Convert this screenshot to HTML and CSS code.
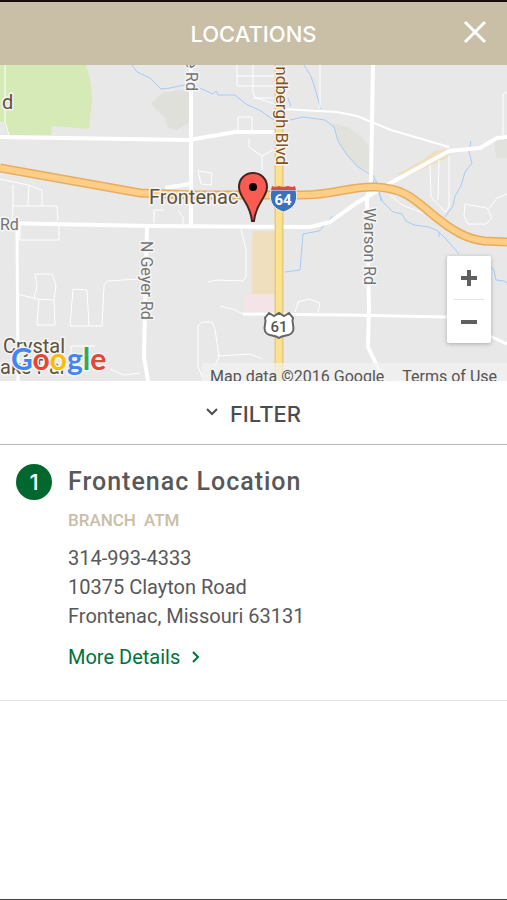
FILE: index.html
```html
<!DOCTYPE html>
<html lang="en">
<head>
<meta charset="utf-8">
<meta name="viewport" content="width=device-width, initial-scale=1">
<title>Locations</title>
<link rel="stylesheet" href="styles.css">
</head>
<body>
<header class="topbar">
  <h1 class="topbar-title">LOCATIONS</h1>
  <button class="close" type="button" aria-label="Close">
    <svg width="24" height="24" viewBox="0 0 24 24" aria-hidden="true"><path d="M2 2 22 22M22 2 2 22"/></svg>
  </button>
</header>
<main>
  <section class="map" aria-label="Map">
    <svg class="map-canvas" viewBox="0 65 507 316" preserveAspectRatio="xMidYMid slice" role="img" aria-label="Map of Frontenac">
      <g class="areas">
        <path fill="#d5eab7" d="M0 65H86Q92 82 92 100L89 129 52 126 51 135H9L5 128 4 122H0Z"/>
        <path fill="#e0e0da" d="M151 103 162 93 180 90 189 92V123L176 130 167 127 166 118 157 111Z"/>
        <path fill="#e2e2dc" d="M332 123 348 127 364 139 371 150V172L356 166 340 146ZM494 140 507 136V158H496Z"/>
        <path fill="#efdfbf" d="M397 174 423 160 434 151 447 149 449 157 425 168 405 177ZM253 231H275V295H252V240Z"/>
        <path fill="#f4e4e8" d="M246 294H275V312H246Z"/>
      </g>
      <g class="water">
        <path d="M132 65 137 72 150 78 161 89 170 88 189 84 202 89 213 94 216 91 218 95 235 95 246 104 261 111 272 119 290 120 303 117 325 120 334 127 338 141 347 155 358 167 371 175 375 185 383 202 393 212 402 214 406 221 414 225 429 227 438 231 446 239 459 254"/>
        <path d="M304 65Q312 76 314 85L321 109M288 98 291 106M471 141 469 152 472 163 465 172 461 186 455 196 453 206 445 217M373 175 378 185 381 201M333 216 319 231 303 234 300 270 285 272M439 232V237M489 266 494 270 496 280 504 281 507 283"/>
      </g>
      <g class="roads-small">
        <path d="M5 65V122L9 135M0 179 28 185 42 190V206H57L58 221M13 185V205L12 224M29 185 28 205M12 206H42M20 225V240H59V223M154 223V210H164M320 108V65M253 65V93L256 98 275 104M237 65V86H275M237 76H275M253 98H275M238 130V117H252V130M249 139V147L262 156V170M262 156 278 147M198 171 201 184 211 185 212 173ZM178 210 183 217V224"/>
        <path d="M20 226 17 250M17 294 37 299 54 300 56 285 52 274H35L37 286 34 299M39 299 37 325H55L54 300M70 326 73 289 87 290 89 326ZM89 326H102L104 285 107 281 140 279M241 229 246 250V276L243 281 216 280 208 282M220 306 235 310 243 314M204 381 198 367V326L202 322H212L215 329 219 357 214 367M218 356 250 354 262 359M295 312 298 302 309 299 320 303 318 312M71 346H95M71 346V355M110 369 124 375 140 373M430 165 431 197 445 212 449 207V156M439 160 438 200M390 195 402 205 423 213M465 204 487 208 492 218 486 224 468 224 464 216ZM489 209 497 198 507 194M503 135 503 94 507 92"/>
      </g>
      <g class="roads">
        <path stroke-width="2" d="M282 109 337 112 357 116 391 130 449 147"/>
        <path stroke-width="3" d="M243 314 346 315 448 317 507 344M17 226 18 381"/>
        <path stroke-width="4" d="M0 137 189 140 235 132H276M0 223 150 226 310 227 330 222 355 204 387 185 449 151 480 148 497 138 507 137M191 65V226M373 65 371 180 367 200 369 310 368 347 384 381M147 226 144 357 148 381M165 188 190 184"/>
      </g>
      <path d="M279 65V381" stroke="#e6ca7d" stroke-width="9"/>
      <path d="M279 65V381" stroke="#fbe28f" stroke-width="6"/>
      <path class="highway-edge" d="M0 168 140 193 195 195H302C335 195 350 186 375 187C404 188 414 199 432 214C455 233 468 239 484 241L507 242"/>
      <path class="highway" d="M0 168 140 193 195 195H302C335 195 350 186 375 187C404 188 414 199 432 214C455 233 468 239 484 241L507 242"/>
      <g class="place">
        <text x="2" y="109">d</text>
        <text x="149" y="204">Frontenac</text>
        <text x="3" y="353">Crystal</text>
        <text x="0" y="374">ake Park</text>
      </g>
      <g class="street">
        <text x="0" y="230">Rd</text>
        <text transform="translate(141 241) rotate(90)">N Geyer Rd</text>
        <text transform="translate(186 91) rotate(90)" text-anchor="end">e Rd</text>
        <text transform="translate(364 208) rotate(90)">Warson Rd</text>
        <text class="boulevard" transform="translate(276 165) rotate(90)" text-anchor="end">ndbergh Blvd</text>
      </g>
      <g>
        <path fill="#3b70bd" stroke="#f5f5f5" d="M271 190H296C299 204 292 209 283.500 212C275 209 268 204 271 190Z"/>
        <path fill="#d84d4b" d="M272 186 275 187 279 186 283 187 288 186 292 187 295 186 296 190H271Z"/>
        <text class="shield interstate" x="283" y="205" text-anchor="middle">64</text>
      </g>
      <g>
        <path fill="#fff" stroke="#666" stroke-width="2" d="M269 313 274 316 279 313 284 316 289 313 293 318C291 323 295 326 293 331C291 337 284 334 279 338C274 334 267 337 265 331C263 326 267 323 265 318Z"/>
        <text class="shield" x="279" y="332" text-anchor="middle">61</text>
      </g>
      <path fill="#fb5c51" stroke="#442321" stroke-width="2" d="M253 173C245 173 239 179 239 187C239 198 250 202 252 221H254C256 202 267 198 267 187C267 179 261 173 253 173Z"/>
      <circle fill="#000" cx="253" cy="187" r="4"/>
      <text class="google" x="11" y="370"><tspan fill="#4285f4">G</tspan><tspan fill="#e94335">o</tspan><tspan fill="#fbbc05">o</tspan><tspan fill="#4285f4">g</tspan><tspan fill="#34a853">l</tspan><tspan fill="#e94335">e</tspan></text>
    </svg>
    <div class="zoom">
      <button type="button" aria-label="Zoom in"><svg width="18" height="18" viewBox="0 0 18 18" aria-hidden="true"><path d="M1 9H17M9 1V17"/></svg></button>
      <button type="button" aria-label="Zoom out"><svg width="18" height="18" viewBox="0 0 18 18" aria-hidden="true"><path d="M1 9H17"/></svg></button>
    </div>
    <div class="attribution">
      <span>Map data ©2016 Google</span>
      <a href="#terms">Terms of Use</a>
    </div>
  </section>
  <button class="filter" type="button">
    <svg width="12" height="8" viewBox="0 0 12 8" aria-hidden="true"><path d="M1 1 6 6 11 1"/></svg>
    <span>FILTER</span>
  </button>
  <article class="location">
    <span class="number">1</span>
    <div class="details">
      <h2>Frontenac Location</h2>
      <p class="tags"><span>BRANCH</span><span>ATM</span></p>
      <address>314-993-4333<br>10375 Clayton Road<br>Frontenac, Missouri 63131</address>
      <a class="more" href="#details">More Details
        <svg width="8" height="14" viewBox="0 0 8 14" aria-hidden="true"><path d="M1 1 6 6 1 11"/></svg>
      </a>
    </div>
  </article>
</main>
</body>
</html>
```
FILE: styles.css
```css
* {
  box-sizing: border-box;
}

body {
  display: flex;
  flex-direction: column;
  min-height: 100vh;
  margin: 0;
  border-top: 2px solid #170d0c;
  border-bottom: 1px solid #444;
  background: #fff;
  color: #58585a;
  font-family: Roboto, "Liberation Sans", sans-serif;
}

button {
  padding: 0;
  border: 0;
  background: none;
  color: inherit;
}

svg {
  display: block;
  fill: none;
}

.topbar {
  display: grid;
  grid-template-columns: 64px 1fr 64px;
  align-items: center;
  height: 63px;
  background: #c9bea6;
  color: #fff;
}

.topbar-title {
  grid-column: 2;
  margin: 0;
  font: 500 22px/32px Inter, sans-serif;
  text-align: center;
}

.close {
  display: grid;
  place-items: center;
  height: 52px;
  padding-bottom: 4px;
}

.close path {
  stroke: #fff;
  stroke-width: 3;
}

.map {
  position: relative;
  height: 316px;
  overflow: hidden;
  background: #e8e8e8;
}

.map-canvas {
  width: 100%;
  height: 100%;
}

.water {
  stroke: #a5cbf9;
  stroke-width: 1;
}

.roads-small,
.roads {
  stroke: #fff;
  stroke-linejoin: round;
}

.roads-small {
  stroke-width: 1;
}

.highway-edge {
  stroke: #e6ad60;
  stroke-width: 9;
}

.highway {
  stroke: #fece87;
  stroke-width: 6;
}

.map text {
  paint-order: stroke;
  stroke: #f5f5f5;
  stroke-width: 3px;
  stroke-linejoin: round;
}

.place {
  fill: #5f513c;
  font-size: 20px;
}

.street {
  fill: #737373;
  font-size: 16px;
}

.street .boulevard {
  fill: #875116;
  font-size: 17px;
}

.map .shield {
  fill: #555;
  stroke: none;
  font-size: 15px;
  font-weight: 500;
}

.map .interstate {
  fill: #fff;
  font-weight: 700;
}

.google {
  font: 700 30px Lato, sans-serif;
}

.zoom {
  position: absolute;
  right: 16px;
  bottom: 38px;
  width: 44px;
  border-radius: 2px;
  background: #fff;
  box-shadow: 0 1px 4px #0004;
}

.zoom button {
  display: grid;
  place-items: center;
  width: 100%;
  height: 43px;
}

.zoom button + button {
  grid-template-rows: 1px 1fr;
  height: 44px;
}

.zoom button + button::before {
  content: "";
  width: 30px;
  height: 1px;
  background: #e3e3e3;
}

.zoom path {
  stroke: #606060;
  stroke-width: 4;
}

.attribution {
  position: absolute;
  right: 0;
  bottom: -10px;
  display: flex;
  gap: 18px;
  padding: 0 10px 0 8px;
  background: #f1f1f1b8;
  color: #555;
  font-size: 16px;
  line-height: 28px;
  white-space: nowrap;
}

.attribution a {
  color: inherit;
  text-decoration: none;
}

.filter {
  display: flex;
  align-items: center;
  justify-content: center;
  gap: 12px;
  width: 100%;
  height: 64px;
  padding-top: 2px;
  border-bottom: 1px solid #bbb;
  color: #4d4d4f;
  font: 500 22px/32px Inter, sans-serif;
}

.filter svg {
  margin-bottom: 4px;
}

.filter path {
  stroke: #4d4d4f;
  stroke-width: 2;
}

.location {
  display: flex;
  align-items: flex-start;
  gap: 16px;
  padding: 19px 16px 28px;
  border-bottom: 1px solid #e0e0e0;
}

.number {
  flex: none;
  width: 36px;
  border-radius: 50%;
  background: #00682f;
  color: #fff;
  font: 500 22px/36px Inter, sans-serif;
  text-align: center;
}

.details h2 {
  margin: 0;
  font-size: 25px;
  font-weight: 500;
  line-height: 36px;
  letter-spacing: 1px;
}

.tags {
  display: flex;
  gap: 8px;
  margin: 8px 0 12px;
  color: #c9bea6;
  font-size: 17px;
  font-weight: 500;
  line-height: 24px;
}

address {
  font-size: 20px;
  font-style: normal;
  line-height: 29px;
}

.more {
  display: inline-flex;
  align-items: center;
  gap: 12px;
  margin-top: 12px;
  color: #00713a;
  font-size: 20px;
  line-height: 29px;
  text-decoration: none;
}

.more path {
  stroke: #00713a;
  stroke-width: 2;
}
```
